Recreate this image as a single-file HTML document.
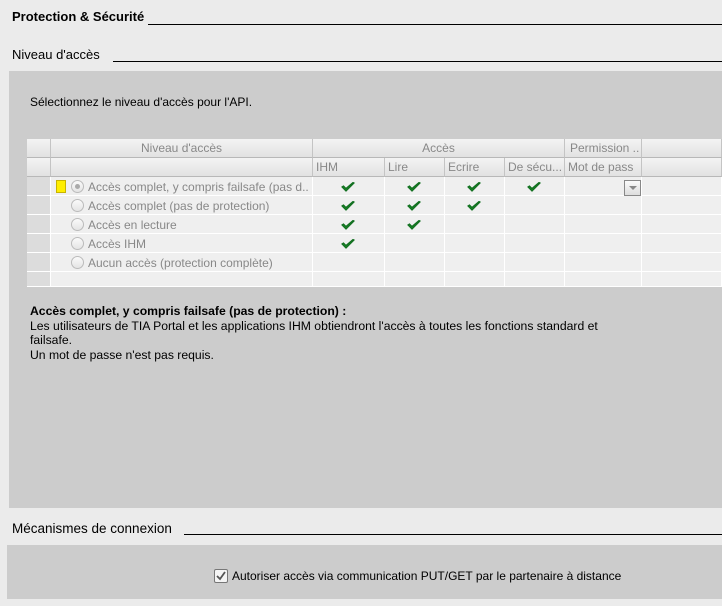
<!DOCTYPE html>
<html><head><meta charset="utf-8"><style>
*{margin:0;padding:0;box-sizing:border-box}
body{width:722px;height:606px;background:#ebebeb;font-family:"Liberation Sans",sans-serif;font-size:12px;color:#000;position:relative;overflow:hidden}
.abs{position:absolute}
.hl{position:absolute;height:1px;background:#000}
.panel{position:absolute;background:#cccccc}
.cell{position:absolute;border-right:1px solid #fff;border-bottom:1px solid #fff;font-size:12px;color:#888;white-space:nowrap;overflow:hidden}
.hdr{background:linear-gradient(#f4f4f4,#e2e2e2);border-right:1px solid #c4c4c4;border-bottom:1px solid #b8b8b8}
.chk{position:absolute;width:14px;height:10px}
.radio{position:absolute;width:13px;height:13px;border:1px solid #bbb;border-radius:50%;background:linear-gradient(#fafafa,#e4e4e4)}
</style></head><body>
<div class="abs" style="left:12px;top:9px;font-weight:bold;font-size:13px">Protection &amp; Sécurité</div>
<div class="hl" style="left:148px;top:24px;width:574px"></div>
<div class="abs" style="left:12px;top:47px;font-size:13px">Niveau d'accès</div>
<div class="hl" style="left:113px;top:61px;width:609px"></div>
<div class="panel" style="left:9px;top:71px;width:713px;height:437px"></div>
<div class="abs" style="left:30px;top:95px;font-size:12px">Sélectionnez le niveau d'accès pour l'API.</div>

<div class="abs" style="left:27px;top:139px;width:695px;height:148px;background:#efefef;border:1px solid #d8d8d8"></div>
<div class="cell hdr" style="left:27px;top:139px;width:24px;height:19px"></div>
<div class="cell hdr" style="left:51px;top:139px;width:262px;height:19px;text-align:center;line-height:19px">Niveau d'accès</div>
<div class="cell hdr" style="left:313px;top:139px;width:252px;height:19px;text-align:center;line-height:19px">Accès</div>
<div class="cell hdr" style="left:565px;top:139px;width:77px;height:19px;line-height:19px;padding-left:5px">Permission ..</div>
<div class="cell hdr" style="left:642px;top:139px;width:80px;height:19px"></div>
<div class="cell hdr" style="left:27px;top:158px;width:24px;height:19px"></div>
<div class="cell hdr" style="left:51px;top:158px;width:262px;height:19px"></div>
<div class="cell hdr" style="left:313px;top:158px;width:72px;height:19px;line-height:19px;padding-left:3px">IHM</div>
<div class="cell hdr" style="left:385px;top:158px;width:60px;height:19px;line-height:19px;padding-left:3px">Lire</div>
<div class="cell hdr" style="left:445px;top:158px;width:60px;height:19px;line-height:19px;padding-left:3px">Ecrire</div>
<div class="cell hdr" style="left:505px;top:158px;width:60px;height:19px;line-height:19px;padding-left:3px">De sécu...</div>
<div class="cell hdr" style="left:565px;top:158px;width:77px;height:19px;line-height:19px;padding-left:3px">Mot de pass</div>
<div class="cell hdr" style="left:642px;top:158px;width:80px;height:19px"></div>

<div id="rows"></div>
<script>
var rows=["Accès complet, y compris failsafe (pas d..","Accès complet (pas de protection)","Accès en lecture","Accès IHM","Aucun accès (protection complète)",""];
var checks=[[1,1,1,1],[1,1,1,0],[1,1,0,0],[1,0,0,0],[0,0,0,0],[0,0,0,0]];
var cols=[[313,72],[385,60],[445,60],[505,60],[565,77],[642,80]];
var h="",y=177;
var hs=[19,19,19,19,19,15];
for(var i=0;i<6;i++){var rh=hs[i];
h+='<div class="cell" style="left:27px;top:'+y+'px;width:24px;height:'+rh+'px;background:#dcdcdc"></div>';
h+='<div class="cell" style="left:51px;top:'+y+'px;width:262px;height:'+rh+'px;line-height:20px;padding-left:37px">'+rows[i]+'</div>';
if(i<5)h+='<div class="radio" style="left:71px;top:'+(y+3)+'px">'+(i==0?'<div style="position:absolute;left:3px;top:3px;width:5px;height:5px;border-radius:50%;background:#aaa"></div>':'')+'</div>';
for(var c=0;c<6;c++){h+='<div class="cell" style="left:'+cols[c][0]+'px;top:'+y+'px;width:'+cols[c][1]+'px;height:'+rh+'px"></div>';
if(c<4&&checks[i][c])h+='<svg class="chk" style="left:'+(cols[c][0]+cols[c][1]/2-8)+'px;top:'+(y+5)+'px" viewBox="0 0 14 10"><path d="M1 5 L5 9 L13 1 L12 0.5 L5 6.5 L2.5 4 Z" fill="#1a8a2a" stroke="#127020" stroke-width="1.2"/></svg>';}
y+=rh;}
document.getElementById('rows').innerHTML=h;
</script>
<div class="abs" style="left:56px;top:180px;width:10px;height:13px;background:#ffee00;border:1px solid #c8b400"></div>
<div class="abs" style="left:624px;top:180px;width:17px;height:16px;border:1px solid #888;background:linear-gradient(#fafafa,#ddd)"><div style="position:absolute;left:4px;top:5px;border-left:4px solid transparent;border-right:4px solid transparent;border-top:4px solid #888"></div></div>

<div class="abs" style="left:30px;top:304px;font-size:12.2px;line-height:14.5px"><b>Accès complet, y compris failsafe (pas de protection) :</b><br>Les utilisateurs de TIA Portal et les applications IHM obtiendront l'accès à toutes les fonctions standard et<br>failsafe.<br>Un mot de passe n'est pas requis.</div>

<div class="abs" style="left:12px;top:521px;font-size:13.5px">Mécanismes de connexion</div>
<div class="hl" style="left:184px;top:534px;width:538px"></div>
<div class="panel" style="left:7px;top:545px;width:715px;height:54px"></div>
<div class="abs" style="left:214px;top:569px;width:14px;height:14px;border:1px solid #777;border-radius:2px;background:#f4f4f4"><svg width="12" height="12" viewBox="0 0 12 12" style="position:absolute;left:0;top:0"><path d="M2 6 L5 9 L10 2" fill="none" stroke="#555" stroke-width="1.8"/></svg></div>
<div class="abs" style="left:232px;top:569px;font-size:12px">Autoriser accès via communication PUT/GET par le partenaire à distance</div>
</body></html>
